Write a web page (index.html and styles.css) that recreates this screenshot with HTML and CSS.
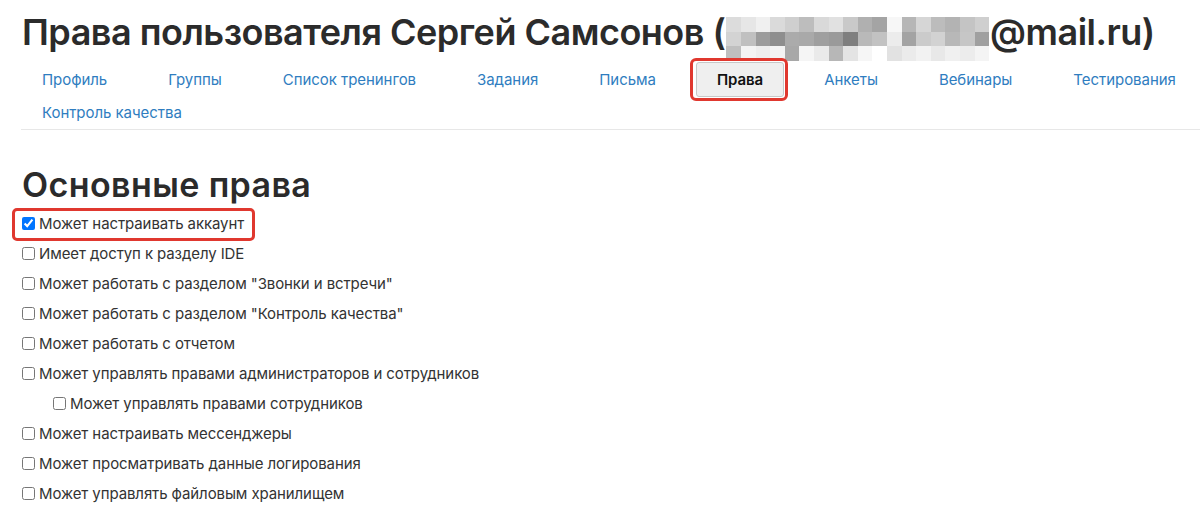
FILE: index.html
```html
<!DOCTYPE html>
<html lang="ru">
<head>
<meta charset="utf-8">
<title>Права пользователя</title>
<link rel="stylesheet" href="styles.css">
</head>
<body>
<h1 class="title">Права пользователя Сергей Самсонов (<span class="mosaic"><i style="background:#dcdcdc"></i><i style="background:#e6e6e6"></i><i style="background:#f0f0f0"></i><i style="background:#dadada"></i><i style="background:#cfcfcf"></i><i style="background:#bdbdbd"></i><i style="background:#d9d9d9"></i><i style="background:#e1e1e1"></i><i style="background:#c9c9c9"></i><i style="background:#b0b0b0"></i><i style="background:#a4a4a4"></i><i style="background:#f7f7f7"></i><i style="background:#b6b6b6"></i><i style="background:#d6d6d6"></i><i style="background:#bcbcbc"></i><i style="background:#b3b3b3"></i><i style="background:#c4c4c4"></i><i style="background:#cfcfcf"></i><i style="background:#d3d3d3"></i><i style="background:#c0c0c0"></i><i style="background:#9c9c9c"></i><i style="background:#8e8e8e"></i><i style="background:#ababab"></i><i style="background:#a9a9a9"></i><i style="background:#9f9f9f"></i><i style="background:#9a9a9a"></i><i style="background:#7f7f7f"></i><i style="background:#b9b9b9"></i><i style="background:#c2c2c2"></i><i style="background:#ececec"></i><i style="background:#a3a3a3"></i><i style="background:#cbcbcb"></i><i style="background:#d2d2d2"></i><i style="background:#b8b8b8"></i><i style="background:#c6c6c6"></i><i style="background:#a0a0a0"></i><i style="background:#bfbfbf"></i><i style="background:#f4f4f4"></i><i style="background:#eeeeee"></i><i style="background:#f3f3f3"></i><i style="background:#a8a8a8"></i><i style="background:#f5f5f5"></i><i style="background:#eaeaea"></i><i style="background:#b7b7b7"></i><i style="background:#e4e4e4"></i><i style="background:#f6f6f6"></i><i style="background:#ffffff"></i><i style="background:#e2e2e2"></i><i style="background:#ebebeb"></i><i style="background:#f2f2f2"></i><i style="background:#e8e8e8"></i><i style="background:#f0f0f0"></i><i style="background:#ececec"></i><i style="background:#f4f4f4"></i></span>@mail.ru)</h1>

<nav class="tabs">
  <a class="tab">Профиль</a>
  <a class="tab">Группы</a>
  <a class="tab">Список тренингов</a>
  <a class="tab">Задания</a>
  <a class="tab">Письма</a>
  <a class="tab active">Права</a>
  <a class="tab">Анкеты</a>
  <a class="tab">Вебинары</a>
  <a class="tab">Тестирования</a>
  <a class="tab">Контроль качества</a>
</nav>

<h2 class="section">Основные права</h2>

<div class="perms">
  <label class="perm highlighted"><input type="checkbox" checked>Может настраивать аккаунт</label>
  <label class="perm"><input type="checkbox">Имеет доступ к разделу IDE</label>
  <label class="perm"><input type="checkbox">Может работать с разделом "Звонки и встречи"</label>
  <label class="perm"><input type="checkbox">Может работать с разделом "Контроль качества"</label>
  <label class="perm"><input type="checkbox">Может работать с отчетом</label>
  <label class="perm"><input type="checkbox">Может управлять правами администраторов и сотрудников</label>
  <label class="perm sub"><input type="checkbox">Может управлять правами сотрудников</label>
  <label class="perm"><input type="checkbox">Может настраивать мессенджеры</label>
  <label class="perm"><input type="checkbox">Может просматривать данные логирования</label>
  <label class="perm"><input type="checkbox">Может управлять файловым хранилищем</label>
</div>
</body>
</html>
```

FILE: styles.css
```css
html, body {
  margin: 0;
  padding: 0;
  background: #ffffff;
}

body {
  font-family: Inter, "Noto Sans", "Liberation Sans", sans-serif;
  color: #333333;
  padding-left: 22px;
  overflow: hidden;
}

.title {
  margin: 10px 0 0 0;
  height: 44px;
  font-size: 36px;
  line-height: 44px;
  font-weight: 600;
  color: #2b2b2b;
  letter-spacing: -0.5px;
  white-space: nowrap;
}

.mosaic {
  display: inline-grid;
  grid-template-columns: repeat(18, 14.6px);
  grid-template-rows: repeat(3, 14.6px);
  height: 44px;
  vertical-align: top;
  transform: translateY(7px);
  margin: 0 1px;
}

.mosaic i {
  display: block;
}

.tabs {
  display: flex;
  flex-wrap: wrap;
  column-gap: 21px;
  margin-top: 9px;
  padding-left: 1px;
  border-bottom: 1px solid #e7e7e7;
  margin-left: -1px;
}

.tab {
  display: block;
  padding: 0 20px;
  font-size: 15px;
  line-height: 33px;
  color: #2f7dc0;
  text-decoration: none;
  letter-spacing: -0.05px;
}

.tab.active {
  position: relative;
  color: #111111;
  font-weight: 600;
  background: #efefef;
  border: 1px solid #c8c8c8;
  border-radius: 3px;
  margin: -1px -1px;
  line-height: 33px;
}

.tab.active::after {
  content: "";
  position: absolute;
  left: -7px;
  right: -5px;
  top: -5px;
  bottom: -5px;
  border: 3px solid #e0382f;
  border-radius: 6px;
}

.section {
  margin: 34px 0 0 0;
  font-size: 34px;
  line-height: 41px;
  font-weight: 600;
  color: #2b2b2b;
  letter-spacing: 0.4px;
}

.perms {
  display: flex;
  flex-direction: column;
  align-items: flex-start;
  margin-top: 3px;
}

.perm {
  display: flex;
  align-items: center;
  height: 30px;
  font-size: 15px;
  color: #333333;
  letter-spacing: -0.1px;
}

.perm input {
  width: 13px;
  height: 13px;
  margin: 0 4px 0 0;
}

.perm.sub {
  padding-left: 31px;
}

.perm.highlighted {
  position: relative;
}

.perm.highlighted::after {
  content: "";
  position: absolute;
  left: -10px;
  right: -11px;
  top: 0;
  bottom: -3px;
  border: 3px solid #e0382f;
  border-radius: 5px;
}
```
